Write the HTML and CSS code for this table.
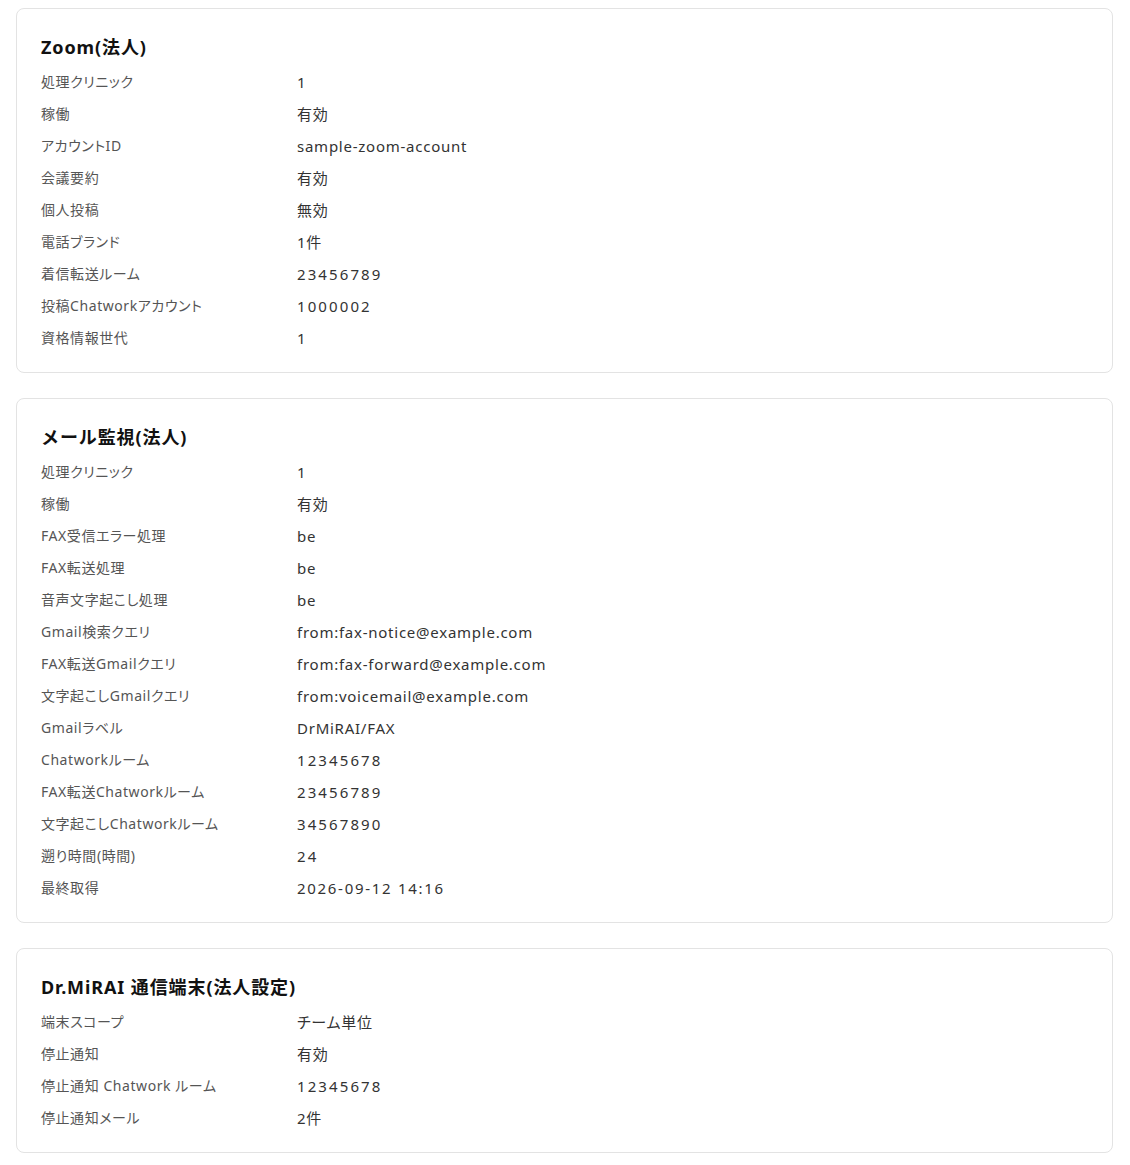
FILE: index.html
```html
<!DOCTYPE html>
<html lang="ja">
<head>
<meta charset="utf-8">
<link rel="stylesheet" href="styles.css">
</head>
<body>
<div class="page">
  <section class="card">
    <h2 class="title">Zoom(法人)</h2>
    <dl class="rows">
      <div class="row"><dt>処理クリニック</dt><dd class="num">1</dd></div>
      <div class="row"><dt>稼働</dt><dd>有効</dd></div>
      <div class="row"><dt>アカウントID</dt><dd>sample-zoom-account</dd></div>
      <div class="row"><dt>会議要約</dt><dd>有効</dd></div>
      <div class="row"><dt>個人投稿</dt><dd>無効</dd></div>
      <div class="row"><dt>電話ブランド</dt><dd>1件</dd></div>
      <div class="row"><dt>着信転送ルーム</dt><dd class="num">23456789</dd></div>
      <div class="row"><dt>投稿Chatworkアカウント</dt><dd class="num">1000002</dd></div>
      <div class="row"><dt>資格情報世代</dt><dd class="num">1</dd></div>
    </dl>
  </section>
  <section class="card">
    <h2 class="title">メール監視(法人)</h2>
    <dl class="rows">
      <div class="row"><dt>処理クリニック</dt><dd class="num">1</dd></div>
      <div class="row"><dt>稼働</dt><dd>有効</dd></div>
      <div class="row"><dt>FAX受信エラー処理</dt><dd>be</dd></div>
      <div class="row"><dt>FAX転送処理</dt><dd>be</dd></div>
      <div class="row"><dt>音声文字起こし処理</dt><dd>be</dd></div>
      <div class="row"><dt>Gmail検索クエリ</dt><dd>from:fax-notice@example.com</dd></div>
      <div class="row"><dt>FAX転送Gmailクエリ</dt><dd>from:fax-forward@example.com</dd></div>
      <div class="row"><dt>文字起こしGmailクエリ</dt><dd>from:voicemail@example.com</dd></div>
      <div class="row"><dt>Gmailラベル</dt><dd>DrMiRAI/FAX</dd></div>
      <div class="row"><dt>Chatworkルーム</dt><dd class="num">12345678</dd></div>
      <div class="row"><dt>FAX転送Chatworkルーム</dt><dd class="num">23456789</dd></div>
      <div class="row"><dt>文字起こしChatworkルーム</dt><dd class="num">34567890</dd></div>
      <div class="row"><dt>遡り時間(時間)</dt><dd class="num">24</dd></div>
      <div class="row"><dt>最終取得</dt><dd class="num date">2026-09-12 14:16</dd></div>
    </dl>
  </section>
  <section class="card">
    <h2 class="title">Dr.MiRAI 通信端末(法人設定)</h2>
    <dl class="rows">
      <div class="row"><dt>端末スコープ</dt><dd>チーム単位</dd></div>
      <div class="row"><dt>停止通知</dt><dd>有効</dd></div>
      <div class="row"><dt>停止通知 Chatwork ルーム</dt><dd class="num">12345678</dd></div>
      <div class="row"><dt>停止通知メール</dt><dd>2件</dd></div>
    </dl>
  </section>
</div>
</body>
</html>
```
FILE: styles.css
```css
* { box-sizing: border-box; }
html, body { margin: 0; padding: 0; background: #fff; }
body {
  font-family: "Noto Sans", "Noto Sans CJK JP", sans-serif;
  color: #333;
}
.page {
  display: flex;
  flex-direction: column;
  gap: 25px;
  padding: 8px 17px 12px 16px;
}
.card {
  border: 1px solid #e3e3e3;
  border-radius: 8px;
  padding: 24px 24px 22px 24px;
  background: #fff;
}
.title {
  margin: 0 0 9px 0;
  font-size: 18px;
  line-height: 28px;
  font-weight: 700;
  color: #111;
  letter-spacing: 0.05em;
}
.rows {
  margin: 0;
  display: flex;
  flex-direction: column;
  gap: 8px;
}
.row {
  display: flex;
  height: 24px;
  align-items: center;
}
.row dt {
  width: 256px;
  flex: none;
  font-size: 14px;
  line-height: 24px;
  color: #555;
  font-feature-settings: "palt";
  letter-spacing: 0.04em;
}
.row dd {
  margin: 0;
  font-size: 15px;
  line-height: 24px;
  color: #333;
  letter-spacing: 0.05em;
  font-feature-settings: "palt";
}
.row dd.num {
  letter-spacing: 2.1px;
}
.row dd.date {
  letter-spacing: 1.7px;
}
```
